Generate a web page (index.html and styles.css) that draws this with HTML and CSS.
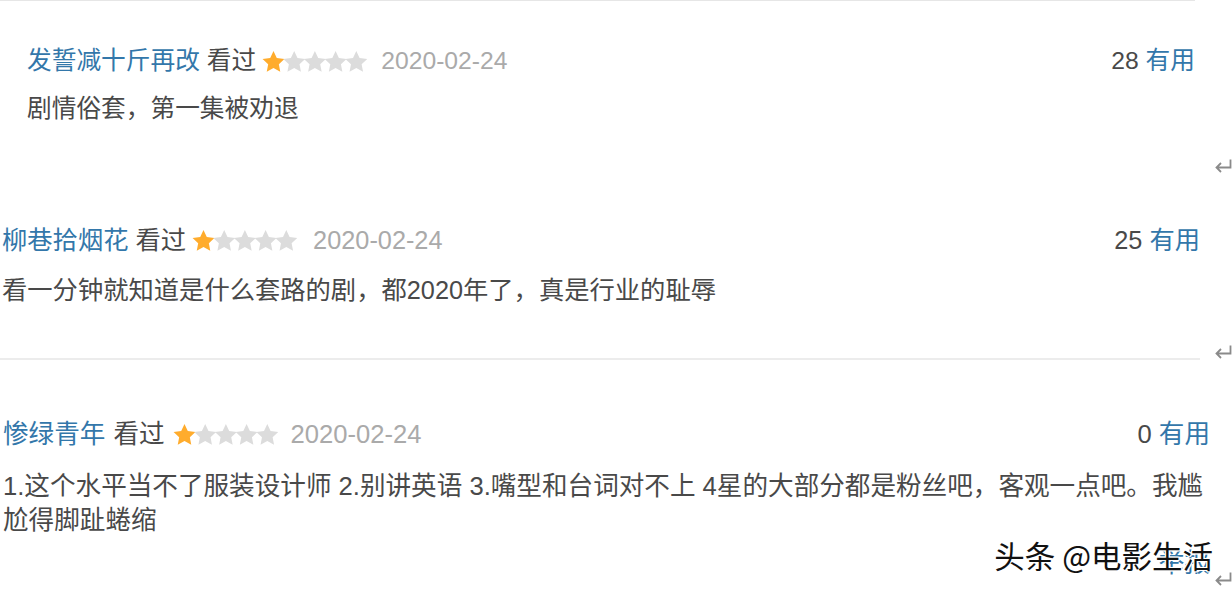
FILE: index.html
```html
<!DOCTYPE html>
<html lang="zh-CN">
<head>
<meta charset="utf-8">
<title>短评</title>
<link rel="stylesheet" href="styles.css">
</head>
<body>
<main class="doc">
  <section class="para p1">
    <div class="card">
      <div class="head">
        <a class="name" href="#">发誓减十斤再改</a>
        <span class="seen">看过</span>
        <svg class="stars" viewBox="0 0 106 21" aria-label="1星">
          <polygon class="on" points="11.5,0 14.79,6.97 22.44,7.95 16.83,13.23 18.26,20.8 11.5,17.1 4.74,20.8 6.17,13.23 0.56,7.95 8.21,6.97"/>
          <polygon transform="translate(20.7 0)" points="11.5,0 14.79,6.97 22.44,7.95 16.83,13.23 18.26,20.8 11.5,17.1 4.74,20.8 6.17,13.23 0.56,7.95 8.21,6.97"/>
          <polygon transform="translate(41.4 0)" points="11.5,0 14.79,6.97 22.44,7.95 16.83,13.23 18.26,20.8 11.5,17.1 4.74,20.8 6.17,13.23 0.56,7.95 8.21,6.97"/>
          <polygon transform="translate(62.1 0)" points="11.5,0 14.79,6.97 22.44,7.95 16.83,13.23 18.26,20.8 11.5,17.1 4.74,20.8 6.17,13.23 0.56,7.95 8.21,6.97"/>
          <polygon transform="translate(82.8 0)" points="11.5,0 14.79,6.97 22.44,7.95 16.83,13.23 18.26,20.8 11.5,17.1 4.74,20.8 6.17,13.23 0.56,7.95 8.21,6.97"/>
        </svg>
        <span class="date">2020-02-24</span>
        <span class="votes"><span class="num">28</span> <a href="#">有用</a></span>
      </div>
      <p class="text">剧情俗套，第一集被劝退</p>
    </div>
    <svg class="mark" viewBox="0 0 18 14" aria-hidden="true"><path d="M16.5 0.5 V8.5 H2.5 M7 4 L2.5 8.5 L7 13"/></svg>
  </section>

  <section class="para p2">
    <div class="card">
      <div class="head">
        <a class="name" href="#">柳巷拾烟花</a>
        <span class="seen">看过</span>
        <svg class="stars" viewBox="0 0 106 21" aria-label="1星">
          <polygon class="on" points="11.5,0 14.79,6.97 22.44,7.95 16.83,13.23 18.26,20.8 11.5,17.1 4.74,20.8 6.17,13.23 0.56,7.95 8.21,6.97"/>
          <polygon transform="translate(20.7 0)" points="11.5,0 14.79,6.97 22.44,7.95 16.83,13.23 18.26,20.8 11.5,17.1 4.74,20.8 6.17,13.23 0.56,7.95 8.21,6.97"/>
          <polygon transform="translate(41.4 0)" points="11.5,0 14.79,6.97 22.44,7.95 16.83,13.23 18.26,20.8 11.5,17.1 4.74,20.8 6.17,13.23 0.56,7.95 8.21,6.97"/>
          <polygon transform="translate(62.1 0)" points="11.5,0 14.79,6.97 22.44,7.95 16.83,13.23 18.26,20.8 11.5,17.1 4.74,20.8 6.17,13.23 0.56,7.95 8.21,6.97"/>
          <polygon transform="translate(82.8 0)" points="11.5,0 14.79,6.97 22.44,7.95 16.83,13.23 18.26,20.8 11.5,17.1 4.74,20.8 6.17,13.23 0.56,7.95 8.21,6.97"/>
        </svg>
        <span class="date">2020-02-24</span>
        <span class="votes"><span class="num">25</span> <a href="#">有用</a></span>
      </div>
      <p class="text">看一分钟就知道是什么套路的剧，都2020年了，真是行业的耻辱</p>
    </div>
    <svg class="mark" viewBox="0 0 18 14" aria-hidden="true"><path d="M16.5 0.5 V8.5 H2.5 M7 4 L2.5 8.5 L7 13"/></svg>
  </section>

  <section class="para p3">
    <div class="card">
      <div class="head">
        <a class="name" href="#">惨绿青年</a>
        <span class="seen">看过</span>
        <svg class="stars" viewBox="0 0 106 21" aria-label="1星">
          <polygon class="on" points="11.5,0 14.79,6.97 22.44,7.95 16.83,13.23 18.26,20.8 11.5,17.1 4.74,20.8 6.17,13.23 0.56,7.95 8.21,6.97"/>
          <polygon transform="translate(20.7 0)" points="11.5,0 14.79,6.97 22.44,7.95 16.83,13.23 18.26,20.8 11.5,17.1 4.74,20.8 6.17,13.23 0.56,7.95 8.21,6.97"/>
          <polygon transform="translate(41.4 0)" points="11.5,0 14.79,6.97 22.44,7.95 16.83,13.23 18.26,20.8 11.5,17.1 4.74,20.8 6.17,13.23 0.56,7.95 8.21,6.97"/>
          <polygon transform="translate(62.1 0)" points="11.5,0 14.79,6.97 22.44,7.95 16.83,13.23 18.26,20.8 11.5,17.1 4.74,20.8 6.17,13.23 0.56,7.95 8.21,6.97"/>
          <polygon transform="translate(82.8 0)" points="11.5,0 14.79,6.97 22.44,7.95 16.83,13.23 18.26,20.8 11.5,17.1 4.74,20.8 6.17,13.23 0.56,7.95 8.21,6.97"/>
        </svg>
        <span class="date">2020-02-24</span>
        <span class="votes"><span class="num">0</span> <a href="#">有用</a></span>
      </div>
      <p class="text">1.这个水平当不了服装设计师 2.别讲英语 3.嘴型和台词对不上 4星的大部分都是粉丝吧，客观一点吧。我尴<br>尬得脚趾蜷缩</p>
      <div class="report"><a href="#">举报</a></div>
    </div>
    <svg class="mark" viewBox="0 0 18 14" aria-hidden="true"><path d="M16.5 0.5 V8.5 H2.5 M7 4 L2.5 8.5 L7 13"/></svg>
    <div class="watermark">头条 @电影生活</div>
  </section>
</main>
</body>
</html>
```

FILE: styles.css
```css
* { box-sizing: border-box; }

html, body {
  margin: 0;
  padding: 0;
  background: #fff;
}

body {
  width: 1232px;
  height: 589px;
  overflow: hidden;
  font-family: "Liberation Sans", Arial, "Noto Sans CJK SC", sans-serif;
  color: #494949;
}

.doc {
  display: flex;
  flex-direction: column;
}

.para {
  position: relative;
  display: flex;
  align-items: flex-end;
}

.card {
  flex: none;
}

.head {
  display: flex;
  align-items: center;
  height: 34px;
  line-height: 34px;
  white-space: nowrap;
}

.name {
  color: #3377aa;
  text-decoration: none;
}

.seen {
  margin-left: 7px;
  color: #494949;
}

.stars {
  flex: none;
  margin-left: 6px;
  height: 21px;
  width: 106px;
  fill: #dcdcdc;
}

.stars .on { fill: #ffac2d; }

.date {
  margin-left: 13px;
  color: #aaaaaa;
}

.votes {
  margin-left: auto;
  color: #494949;
}

.votes a {
  color: #3377aa;
  text-decoration: none;
}

.text {
  margin: 0;
  line-height: 34px;
  white-space: nowrap;
  color: #494949;
}

.mark {
  flex: none;
  margin-left: auto;
  width: 18px;
  height: 14px;
  fill: none;
  stroke: #8a8a8a;
  stroke-width: 1.8;
}

/* block 1 */
.p1 { height: 176px; }
.p1 .card {
  width: 1195px;
  height: 176px;
  padding: 43px 0 0 27px;
  border-top: 1px solid #e6e6e6;
  font-size: 24.7px;
}
.p1 .text { margin-top: 14px; }
.p1 .mark { margin-bottom: 3px; }

/* block 2 */
.p2 { height: 184px; }
.p2 .card {
  width: 1200px;
  height: 184px;
  padding: 47px 0 0 2px;
  border-bottom: 2px solid #ececec;
  font-size: 25.3px;
}
.p2 .date { margin-left: 15px; }
.p2 .text { margin-top: 16px; }
.p2 .mark { margin-bottom: 1px; }

/* block 3 */
.p3 { height: 229px; }
.p3 .card {
  width: 1210px;
  height: 229px;
  padding: 57px 0 0 3px;
  font-size: 25.6px;
}
.p3 .seen { margin-left: 8px; }
.p3 .stars { margin-left: 8px; }
.p3 .date { margin-left: 12px; }
.p3 .text { margin-top: 18px; }
.p3 .mark { margin-bottom: 3px; }

.report {
  margin-top: 9px;
  line-height: 34px;
  text-align: right;
}

.report a {
  color: #3377aa;
  text-decoration: none;
}

.watermark {
  position: absolute;
  right: 19px;
  top: 175px;
  font-family: "Noto Sans CJK SC", sans-serif;
  font-size: 30.5px;
  line-height: 40px;
  color: #111;
  white-space: nowrap;
  text-shadow:
    1px 0 0 #fff, -1px 0 0 #fff, 0 1px 0 #fff, 0 -1px 0 #fff,
    1px 1px 0 #fff, -1px -1px 0 #fff, 1px -1px 0 #fff, -1px 1px 0 #fff;
}
```
